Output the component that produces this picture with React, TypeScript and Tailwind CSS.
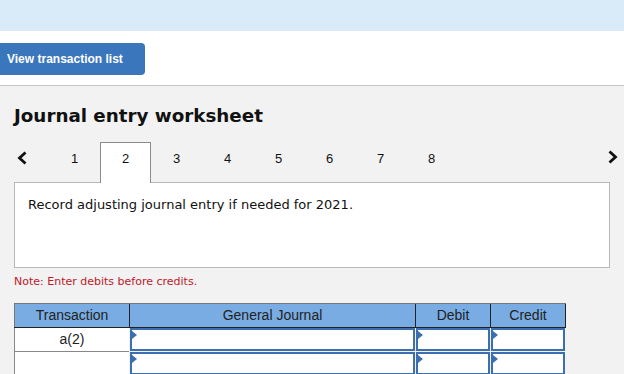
import React from "react";

const Chevron = ({ dir }: { dir: "left" | "right" }) => (
  <svg width="11" height="14" viewBox="0 0 11 14" className="block">
    {dir === "left" ? (
      <polyline points="8.5,1.5 2.5,7 8.5,12.5" fill="none" stroke="#111" strokeWidth="2.8" strokeLinejoin="miter" />
    ) : (
      <polyline points="2.5,1.5 8.5,7 2.5,12.5" fill="none" stroke="#111" strokeWidth="2.8" strokeLinejoin="miter" />
    )}
  </svg>
);

const InputCell = ({ w }: { w: string }) => (
  <div className={`${w} h-[24px] pl-[1px] pb-[1px]`}>
    <div className="relative h-full w-full border-2 border-[#3c6fb0] bg-white">
      <div className="absolute left-0 top-[1px] h-0 w-0 border-y-[4px] border-l-[5px] border-y-transparent border-l-[#3c6fb0]" />
    </div>
  </div>
);

export default function App() {
  const tabs = [1, 2, 3, 4, 5, 6, 7, 8];
  return (
    <div className="w-[624px] h-[374px] overflow-hidden bg-[#f2f2f2]" style={{ fontFamily: "Arial, 'Liberation Sans', sans-serif" }}>
      <div className="h-[31px] bg-[#d9eaf8]" />
      <div className="h-[55px] bg-white border-b border-[#c6c6c6] pt-[12px]">
        <div className="w-[145px] h-[32px] bg-[#3a76bb] rounded-r-[4px] flex items-center px-[7px] text-white text-[12px] font-bold" style={{ fontFamily: "'Liberation Sans', Arial, sans-serif" }}>
          View transaction list
        </div>
      </div>

      <div className="pt-[19px]">
        <div className="px-[14px] text-[18.3px] leading-[22px] font-bold text-[#111]" style={{ fontFamily: "'DejaVu Sans', Verdana, sans-serif" }}>
          Journal entry worksheet
        </div>

        <div className="mt-[15px] flex items-end pl-[17px] pr-[6px] h-[40px]">
          <div className="self-start mt-[9px]">
            <Chevron dir="left" />
          </div>
          <div className="ml-[21px] flex items-end">
            {tabs.map((t) =>
              t === 2 ? (
                <div key={t} className="relative z-10 -mb-px w-[51px] h-[41px] bg-white border-x border-t border-[#8a8a8a] pt-[8px] text-center text-[13px] leading-[16px] text-[#111]" style={{ fontFamily: "'Liberation Sans', Arial, sans-serif" }}>
                  {t}
                </div>
              ) : (
                <div key={t} className="w-[51px] h-[40px] pt-[9px] text-center text-[13px] leading-[16px] text-[#111]" style={{ fontFamily: "'Liberation Sans', Arial, sans-serif" }}>
                  {t}
                </div>
              )
            )}
          </div>
          <div className="ml-auto self-start mt-[8px]">
            <Chevron dir="right" />
          </div>
        </div>

        <div className="mx-[14px] h-[86px] bg-white border border-[#b8b8b8] pl-[13px] pt-[14px] text-[13px] leading-[16px] text-[#111]" style={{ fontFamily: "'DejaVu Sans', Verdana, sans-serif" }}>
          Record adjusting journal entry if needed for 2021.
        </div>

        <div className="mt-[7px] px-[14px] text-[11px] leading-[14px] text-[#c0182a]" style={{ fontFamily: "'DejaVu Sans', Verdana, sans-serif" }}>
          Note: Enter debits before credits.
        </div>

        <div className="mt-[14px] ml-[14px] w-[552px]" style={{ fontFamily: "'Liberation Sans', Arial, sans-serif" }}>
          <div className="flex h-[25px] bg-[#78ace2] border-t border-[#777] border-b border-b-[#222] text-[14px] text-[#222]">
            <div className="w-[115px] border-l border-[#777] flex items-center justify-center">Transaction</div>
            <div className="w-[286px] border-l border-[#222] flex items-center justify-center">General Journal</div>
            <div className="w-[75px] border-l border-[#222] flex items-center justify-center">Debit</div>
            <div className="w-[76px] border-x border-[#222] flex items-center justify-center">Credit</div>
          </div>
          <div className="flex">
            <div className="w-[115px] h-[24px] bg-white border-l border-b border-[#888] flex items-center justify-center text-[14px] text-[#222]">a(2)</div>
            <InputCell w="w-[286px]" />
            <InputCell w="w-[75px]" />
            <InputCell w="w-[75px]" />
          </div>
          <div className="flex">
            <div className="w-[115px] h-[24px] bg-white border-l border-b border-[#888]" />
            <InputCell w="w-[286px]" />
            <InputCell w="w-[75px]" />
            <InputCell w="w-[75px]" />
          </div>
        </div>
      </div>
    </div>
  );
}
